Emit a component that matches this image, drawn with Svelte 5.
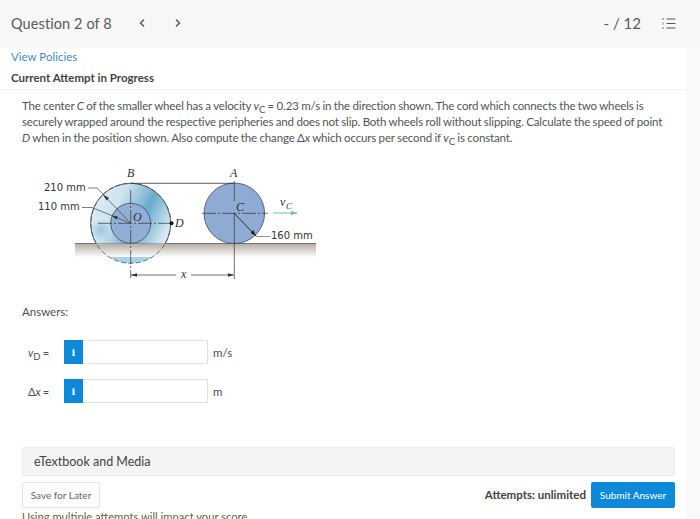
<script lang="ts">
	// WileyPLUS-style question page: header bar, prompt with figure, answers and footer
	const answers = [
		{ id: 'vd', unit: 'm/s' },
		{ id: 'dx', unit: 'm' }
	];
</script>

<div class="page">
	<header class="topbar">
		<span class="title">Question 2 of 8</span>
		<button class="nav" aria-label="Previous">
			<svg width="8" height="10" viewBox="0 0 8 10"><path d="M6 1.5 2.5 5 6 8.5" /></svg>
		</button>
		<button class="nav" aria-label="Next">
			<svg width="8" height="10" viewBox="0 0 8 10"><path d="M2 1.5 5.5 5 2 8.5" /></svg>
		</button>
		<span class="score">- / 12</span>
		<svg class="list" width="14" height="13" viewBox="0 0 14 13">
			<path d="M4.5 2h9M4.5 6.5h9M4.5 11h9" stroke="#555" stroke-width="1.2" />
			<path d="M1 1v2M1 5.5v2M1 10v2" stroke="#777" stroke-width="1.4" stroke-dasharray="0.8 0.4" />
		</svg>
	</header>

	<div class="sheet">
		<div class="policies">
			<a class="link" href="#policies">View Policies</a>
			<h2>Current Attempt in Progress</h2>
		</div>

		<main class="content">
			<p class="prompt">
				The center <i>C</i> of the smaller wheel has a velocity <i>v</i><sub>C</sub> = 0.23 m/s in the direction shown. The cord which connects the two wheels is securely wrapped around the respective peripheries and does not slip. Both wheels roll without slipping. Calculate the speed of point <i>D</i> when in the position shown. Also compute the change Δ<i>x</i> which occurs per second if <i>v</i><sub>C</sub> is constant.
			</p>

			<svg class="figure" width="300" height="130" viewBox="30 160 300 130">
				<defs>
					<linearGradient id="ground" x1="0" y1="0" x2="0" y2="1">
						<stop offset="0" stop-color="#b5aca3" />
						<stop offset="1" stop-color="#fff" />
					</linearGradient>
					<linearGradient id="rim" x1="0" y1="0" x2="1" y2="0.5">
						<stop offset="0" stop-color="#e2eef5" />
						<stop offset="0.38" stop-color="#cfe3ee" />
						<stop offset="0.7" stop-color="#68abcd" />
						<stop offset="1" stop-color="#d8e9f2" />
					</linearGradient>
					<radialGradient id="blob">
						<stop offset="0" stop-color="#8cc0da" stop-opacity="0.8" />
						<stop offset="1" stop-color="#8cc0da" stop-opacity="0" />
					</radialGradient>
					<clipPath id="above"><rect x="30" y="160" width="300" height="83.5" /></clipPath>
					<clipPath id="below"><rect x="30" y="257" width="300" height="10" /></clipPath>
				</defs>

				<rect x="75" y="243.5" width="241" height="14" fill="url(#ground)" />
				<path d="M75 243.5H316" stroke="#555" stroke-width="0.8" />

				<circle cx="130.7" cy="223.3" r="40" fill="url(#rim)" clip-path="url(#above)" />
				<circle cx="101" cy="230" r="11" fill="url(#blob)" clip-path="url(#above)" />
				<circle cx="130.7" cy="223.3" r="40" fill="#a9d2e6" clip-path="url(#below)" />
				<circle cx="130.7" cy="223.3" r="40" fill="none" stroke="#46525c" stroke-width="0.9" clip-path="url(#above)" />
				<circle cx="130.7" cy="223.3" r="40" fill="none" stroke="#46525c" stroke-width="0.8" stroke-dasharray="5 2.5" />
				<circle cx="130.7" cy="223.3" r="20" fill="#92add6" stroke="#3e4a58" stroke-width="0.8" />

				<circle cx="234.3" cy="213.3" r="30.3" fill="#8fabd4" stroke="#3e4a58" stroke-width="0.8" />

				<path d="M130.7 183.3H234.3" stroke="#333" stroke-width="0.8" />
				<path d="M130.7 190V278M98 223.3H170M202 213.3H268" stroke="#333" stroke-width="0.7" stroke-dasharray="14 2 2 2" />
				<path d="M234.3 181V201M234.3 213V279" stroke="#333" stroke-width="0.7" />
				<path d="M234.3 213.3 256 236" stroke="#222" stroke-width="0.9" />
				<path d="M256 236 250.5 233 253.5 230Z" fill="#222" />
				<path d="M256 236.5H270" stroke="#666" stroke-width="0.7" />

				<path d="M88 188H97L130.7 223.3" fill="none" stroke="#444" stroke-width="0.7" />
				<path d="M82 207.5H92L130.7 223.3" fill="none" stroke="#444" stroke-width="0.7" />
				<path d="M103 194.5 109 198 106.5 200.5Z" fill="#333" />
				<path d="M111.5 215.5 118 216.5 116.5 219.5Z" fill="#333" />
				<circle cx="171.5" cy="223.3" r="2" fill="#111" />

				<path d="M131 275H176M191 275H234" stroke="#333" stroke-width="0.7" />
				<path d="M131 275 137 273.2V276.8ZM234 275 228 273.2V276.8Z" fill="#333" />

				<path d="M273 213H297" stroke="#6fc0a8" stroke-width="1" />
				<path d="M298 213 291 211V215Z" fill="#6fc0a8" />

				<text class="dim" x="44" y="191">210 mm</text>
				<text class="dim" x="38" y="210">110 mm</text>
				<text class="dim" x="271" y="239">160 mm</text>
				<text class="tag" x="127" y="177">B</text>
				<text class="tag" x="230" y="177">A</text>
				<text class="tag" x="133" y="221">O</text>
				<text class="tag" x="236" y="211">C</text>
				<text class="tag" x="175" y="227">D</text>
				<text class="tag small" x="181" y="278">x</text>
				<text class="tag small" x="280" y="206">v</text>
				<text class="tag tiny" x="286" y="209">C</text>
			</svg>

			<p class="answers-label">Answers:</p>

			<div class="answers">
				{#each answers as a (a.id)}
					<div class="row">
						<span class="var">
							{#if a.id === 'vd'}<i>v</i><sub>D</sub> ={:else}Δ<i>x</i> ={/if}
						</span>
						<span class="info">i</span>
						<input class="field" type="text" aria-label={a.id} />
						<span class="unit">{a.unit}</span>
					</div>
				{/each}
			</div>

			<div class="media">eTextbook and Media</div>

			<div class="actions">
				<div class="left">
					<button class="save">Save for Later</button>
					<p class="warning">Using multiple attempts will impact your score.</p>
				</div>
				<span class="attempts">Attempts: unlimited</span>
				<button class="submit">Submit Answer</button>
			</div>
		</main>
	</div>
</div>

<style>
	:global(body) {
		margin: 0;
		background: #f9f9f9;
	}
	.page {
		width: 700px;
		height: 519px;
		overflow: hidden;
		font-family: Lato, 'Open Sans', sans-serif;
		color: #4a4f54;
		background: #f9f9f9;
	}
	.topbar {
		display: flex;
		align-items: center;
		height: 48px;
		padding: 0 24px 2px 11px;
		box-sizing: border-box;
		background: #f7f7f7;
	}
	.title {
		font-size: 14.5px;
		letter-spacing: 0.1px;
		font-weight: 400;
		color: #5a5a5a;
		width: 125px;
	}
	.nav {
		display: flex;
		width: 36px;
		padding: 0 0 0 2px;
		border: 0;
		background: none;
	}
	.nav path {
		fill: none;
		stroke: #555;
		stroke-width: 1.4;
	}
	.score {
		margin-left: auto;
		font-size: 15px;
		color: #5a5a5a;
	}
	.list {
		margin-left: 21px;
	}
	.sheet {
		width: 686px;
		background: #fff;
	}
	.policies {
		padding: 1px 11px 0;
		height: 42px;
		box-sizing: border-box;
		border-bottom: 1px solid #f2f2f2;
	}
	.link {
		display: block;
		font-size: 11.5px;
		line-height: 16px;
		color: #3f8fbd;
		text-decoration: none;
	}
	h2 {
		margin: 5px 0 0;
		font-size: 11.5px;
		line-height: 16px;
		font-weight: 700;
		color: #444;
	}
	.content {
		margin-left: 11px;
		padding: 8px 11px 0;
		background: #fff;
	}
	.prompt {
		max-width: 645px;
		margin: 0;
		font-size: 11.5px;
		letter-spacing: -0.15px;
		word-spacing: -0.3px;
		line-height: 16px;
		color: #50555a;
	}
	sub {
		font-size: 9.5px;
		line-height: 0;
	}
	.figure {
		display: block;
		margin: 14px 0 0 8px;
	}
	.figure text {
		fill: #333;
	}
	.dim {
		font-family: 'DejaVu Sans', sans-serif;
		font-size: 10px;
	}
	.tag {
		font-family: 'Liberation Serif', serif;
		font-style: italic;
		font-size: 12px;
	}
	.tag.small {
		font-size: 12px;
	}
	.tag.tiny {
		font-size: 9px;
	}
	.answers-label {
		margin: 14px 0 0;
		font-size: 11.5px;
		line-height: 16px;
	}
	.answers {
		margin-top: 20px;
		display: flex;
		flex-direction: column;
		gap: 15px;
	}
	.row {
		display: flex;
		align-items: center;
		height: 24px;
	}
	.var {
		width: 42px;
		padding-left: 6px;
		box-sizing: border-box;
		font-size: 11px;
		word-spacing: -0.6px;
	}
	.info {
		display: flex;
		align-items: center;
		justify-content: center;
		width: 19px;
		height: 24px;
		background: #0c8ad9;
		color: #fff;
		font-family: 'DejaVu Serif', serif;
		font-weight: 700;
		font-size: 10px;
	}
	.field {
		width: 125px;
		height: 24px;
		padding: 0;
		box-sizing: border-box;
		border: 1px solid #e0e0e0;
		border-left: 0;
		background: #fff;
	}
	.unit {
		margin-left: 5px;
		font-size: 11.5px;
	}
	.media {
		margin-top: 44px;
		height: 29px;
		box-sizing: border-box;
		padding-left: 11px;
		display: flex;
		align-items: center;
		font-size: 12.5px;
		color: #444;
		background: #f4f4f4;
		border: 1px solid #ececec;
		border-radius: 2px;
	}
	.actions {
		display: flex;
		align-items: flex-start;
		margin-top: 6px;
	}
	.left {
		margin-right: auto;
	}
	.save {
		display: block;
		width: 78px;
		height: 26px;
		padding: 0;
		border: 1px solid #e4e4e4;
		border-radius: 2px;
		background: #fff;
		font-family: inherit;
		font-size: 10px;
		color: #666;
	}
	.warning {
		margin: 2px 0 0;
		font-size: 11.2px;
		line-height: 14px;
		color: #6b5d3f;
	}
	.attempts {
		margin-top: 5px;
		font-size: 11.5px;
		line-height: 16px;
		font-weight: 700;
		color: #444;
	}
	.submit {
		margin-left: 5px;
		width: 84px;
		height: 26px;
		padding: 0;
		border: 0;
		border-radius: 2px;
		background: #0c8ad9;
		color: #fff;
		font-family: inherit;
		font-size: 10px;
	}
</style>
